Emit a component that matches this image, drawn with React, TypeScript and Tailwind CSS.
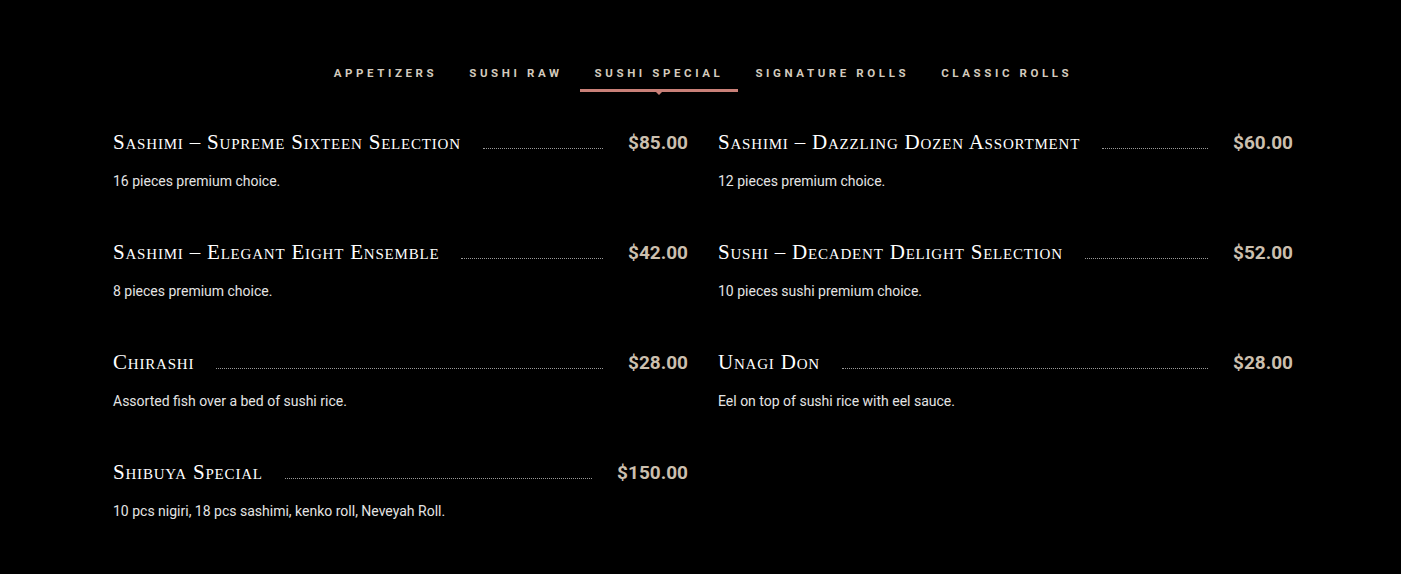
type item = {
  name: string;
  price: string;
  description: string;
};

const tabs = ["Appetizers", "Sushi Raw", "Sushi Special", "Signature Rolls", "Classic Rolls"];

const items: item[] = [
  { name: "Sashimi – Supreme Sixteen Selection", price: "$85.00", description: "16 pieces premium choice." },
  { name: "Sashimi – Dazzling Dozen Assortment", price: "$60.00", description: "12 pieces premium choice." },
  { name: "Sashimi – Elegant Eight Ensemble", price: "$42.00", description: "8 pieces premium choice." },
  { name: "Sushi – Decadent Delight Selection", price: "$52.00", description: "10 pieces sushi premium choice." },
  { name: "Chirashi", price: "$28.00", description: "Assorted fish over a bed of sushi rice." },
  { name: "Unagi Don", price: "$28.00", description: "Eel on top of sushi rice with eel sauce." },
  { name: "Shibuya Special", price: "$150.00", description: "10 pcs nigiri, 18 pcs sashimi, kenko roll, Neveyah Roll." },
];

const App = () => {
  const active = "Sushi Special";

  return (
    <div className="min-h-screen bg-black pt-[64px] pb-10 font-['Roboto',sans-serif]">
      <nav className="flex justify-center gap-[2px] pl-[5px]">
        {tabs.map((tab) => (
          <div
            key={tab}
            className={`relative px-[15px] pb-[7px] border-b-[3px] ${tab === active ? "border-[#c98078]" : "border-transparent"}`}
          >
            <span className="block text-[11.5px] leading-[18px] font-bold uppercase tracking-[3.6px] text-[#d3cabd]">
              {tab}
            </span>
            {tab === active && (
              <span className="absolute left-1/2 top-full -translate-x-1/2 w-0 h-0 border-x-[6px] border-x-transparent border-t-[6px] border-t-[#c98078]" />
            )}
          </div>
        ))}
      </nav>

      <div className="mx-auto mt-[36px] w-[1185px] pl-[5px] grid grid-cols-2 gap-x-[30px] gap-y-[47px]">
        {items.map((menuItem, index) => (
          <div key={index}>
            <div className="flex items-center">
              <h3 className="text-[21px] leading-[28px] text-white font-['Liberation_Serif',serif] [font-variant:small-caps] tracking-[0.8px] whitespace-nowrap">
                {menuItem.name}
              </h3>
              <div className="flex-1 h-0 ml-[22px] mr-[25px] mt-[12px] border-b border-dotted border-[#9a9a9a]"></div>
              <span className="text-[19px] leading-[28px] font-bold text-[#cbbfae] translate-y-[1px]">{menuItem.price}</span>
            </div>
            <p className="mt-[15px] text-[14px] leading-[20px] text-[#e4e4e4]">{menuItem.description}</p>
          </div>
        ))}
      </div>
    </div>
  );
};

export default App;
